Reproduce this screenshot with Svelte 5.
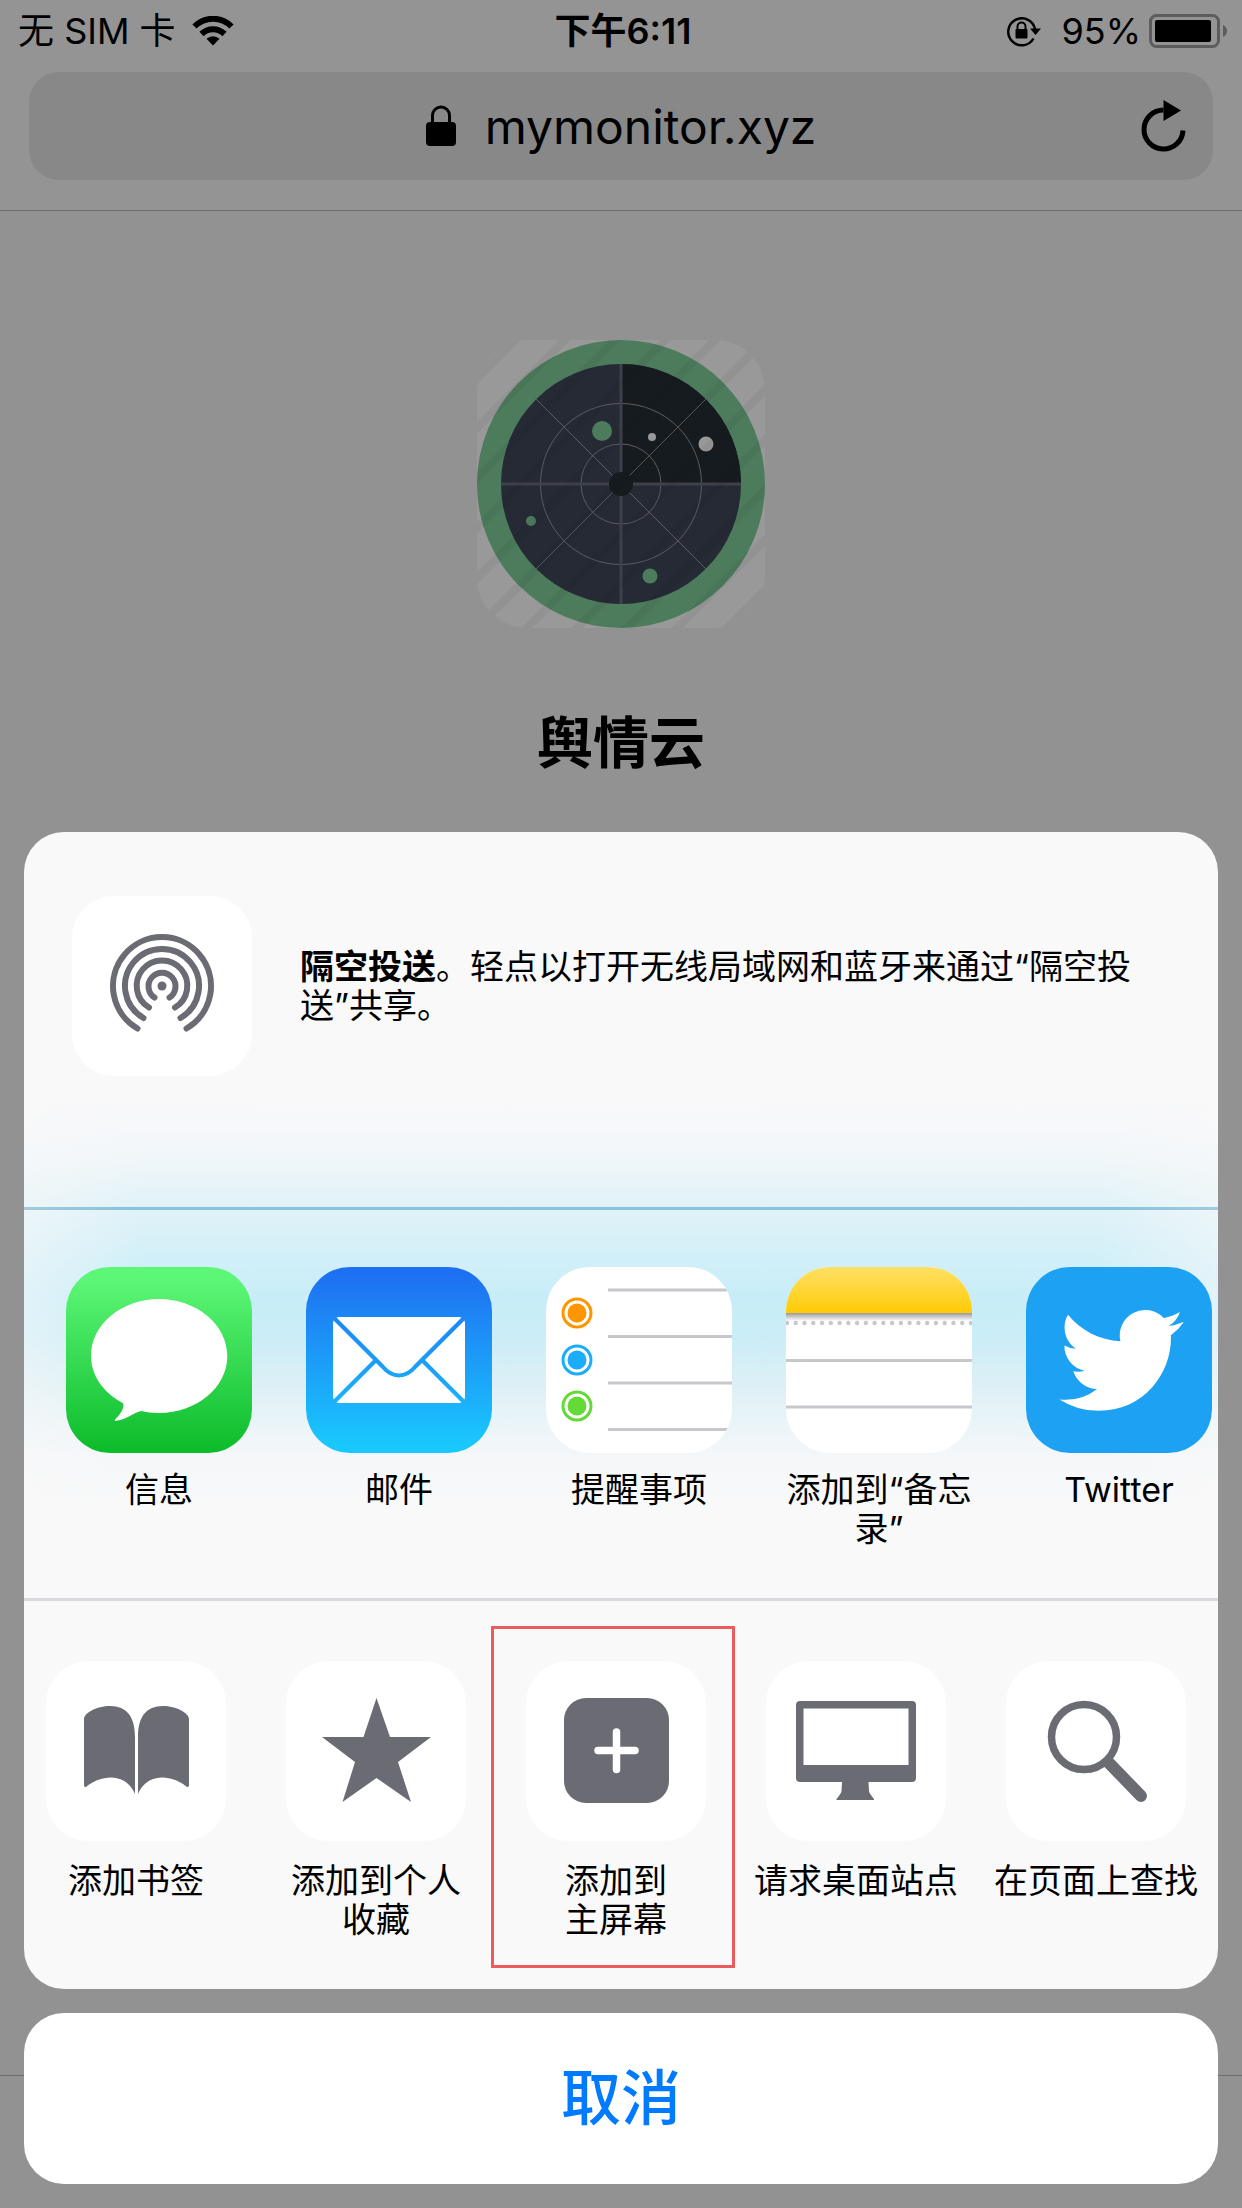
<script>
  const apps = [
    { id: 'messages', label: '信息' },
    { id: 'mail', label: '邮件' },
    { id: 'reminders', label: '提醒事项' },
    { id: 'notes', label: '添加到“备忘\n录”' },
    { id: 'twitter', label: 'Twitter' },
  ];
  const actions = [
    { id: 'bookmark', label: '添加书签' },
    { id: 'favorite', label: '添加到个人\n收藏' },
    { id: 'home', label: '添加到\n主屏幕', highlighted: true },
    { id: 'desktop', label: '请求桌面站点' },
    { id: 'find', label: '在页面上查找' },
  ];
  const stripes = Array.from({ length: 11 }, (_, i) => 42 + i * 50);
  const perforations = Array.from({ length: 22 }, (_, i) => 1 + i * 8.76);
  const reminders = [
    { y: 46, color: '#ff9500' },
    { y: 93, color: '#1badf8' },
    { y: 139, color: '#63da38' },
  ];
</script>

{#snippet appIcon(id)}
  <svg class="app-icon" viewBox="0 0 186 186" aria-hidden="true">
    {#if id === 'messages'}
      <defs>
        <linearGradient id="g-msg" x1="0" y1="0" x2="0" y2="1">
          <stop offset="0.06" stop-color="#5df777" />
          <stop offset="1" stop-color="#0bbb29" />
        </linearGradient>
      </defs>
      <rect width="186" height="186" fill="url(#g-msg)" />
      <path fill="#fff" d="M93 32C130.500 32 161.300 57.500 161.300 89S130.500 146 93 146C86 146 80 145 75 144C69 145 60 153 49 154C47 153 57 147 57.500 138Q57.500 136 55 135C37 125 25 108 25 89C25 57.500 55.500 32 93 32Z" />
    {:else if id === 'mail'}
      <defs>
        <linearGradient id="g-mail" gradientUnits="userSpaceOnUse" x1="0" y1="0" x2="0" y2="186">
          <stop offset="0.04" stop-color="#1e70f2" />
          <stop offset="0.96" stop-color="#1ac8fd" />
        </linearGradient>
      </defs>
      <rect width="186" height="186" fill="url(#g-mail)" />
      <rect x="27" y="50" width="132" height="86" rx="6" fill="#fff" />
      <g fill="none" stroke="url(#g-mail)" stroke-width="4.200">
        <path d="M27 50L76 99Q84 108.500 93 108.500Q102 108.500 110 99L159 50" />
        <path d="M27 136L69 94M159 136L117 94" />
      </g>
    {:else if id === 'reminders'}
      <rect width="186" height="186" fill="#fff" />
      <path d="M62 23H186M62 69.500H186M62 116H186M62 162.500H186" stroke="#c8c7cc" stroke-width="3" />
      {#each reminders as r}
        <circle cx="31" cy={r.y} r="14" fill="none" stroke={r.color} stroke-width="3" />
        <circle cx="31" cy={r.y} r="9.500" fill={r.color} />
      {/each}
    {:else if id === 'notes'}
      <defs>
        <linearGradient id="g-note" x1="0" y1="0" x2="0" y2="1">
          <stop offset="0" stop-color="#ffe066" />
          <stop offset="1" stop-color="#ffcb05" />
        </linearGradient>
        <linearGradient id="g-shade" x1="0" y1="0" x2="0" y2="1">
          <stop offset="0" stop-color="#9a9a9a" />
          <stop offset="1" stop-color="#fff" />
        </linearGradient>
      </defs>
      <rect width="186" height="186" fill="#fff" />
      <rect width="186" height="46" fill="url(#g-note)" />
      <rect y="46" width="186" height="8" fill="url(#g-shade)" />
      {#each perforations as x}
        <circle cx={x} cy="56" r="2.200" fill="#c8c7cc" />
      {/each}
      <path d="M0 93.500H186M0 140H186" stroke="#c8c7cc" stroke-width="3" />
    {:else}
      <rect width="186" height="186" fill="#1da1f2" />
      <path transform="translate(33.500 31.400) scale(5.170)" fill="#fff" d="M23.953 4.570a10 10 0 01-2.825.775 4.958 4.958 0 002.163-2.723c-.951.555-2.005.959-3.127 1.184a4.920 4.920 0 00-8.384 4.482C7.690 8.095 4.067 6.130 1.640 3.162a4.822 4.822 0 00-.666 2.475c0 1.710.870 3.213 2.188 4.096a4.904 4.904 0 01-2.228-.616v.060a4.923 4.923 0 003.946 4.827 4.996 4.996 0 01-2.212.085 4.936 4.936 0 004.604 3.417 9.867 9.867 0 01-6.102 2.105c-.390 0-.779-.023-1.170-.067a13.995 13.995 0 007.557 2.209c9.053 0 13.998-7.496 13.998-13.985 0-.210 0-.420-.015-.630A9.935 9.935 0 0024 4.590z" />
    {/if}
  </svg>
{/snippet}

{#snippet actionIcon(id)}
  <svg class="tile" viewBox="0 0 180 180" aria-hidden="true" fill="#6b6b74">
    {#if id === 'bookmark'}
      <path d="M38 58C38 52 51 45 64 45C81 45 89 56 89 76V133C85 123 76 116.500 65 116.500C55 116.500 46 121 40 126Q38 126 38 124.500Z" />
      <path d="M143 58C143 52 130 45 117 45C100 45 92 56 92 76V133C96 123 105 116.500 116 116.500C126 116.500 135 121 141 126Q143 126 143 124.500Z" />
    {:else if id === 'favorite'}
      <path d="M90.500 37L104 76H145L112 101L125 141L90.500 117L56.500 141L69 101L36 76H77.500Z" />
    {:else if id === 'home'}
      <rect x="38" y="37" width="105" height="105" rx="22" />
      <path d="M90.500 71V108.500M72 89.500H109" stroke="#fff" stroke-width="7.500" stroke-linecap="round" />
    {:else if id === 'desktop'}
      <path fill-rule="evenodd" d="M34 40H146Q150 40 150 44V117Q150 121 146 121H102.500L103 130Q103 132 108 138V139H70.500V138Q75.500 132 75.500 130L76 121H34Q30 121 30 117V44Q30 40 34 40ZM37.500 47.500V104H142.500V47.500Z" />
    {:else}
      <circle cx="78" cy="76" r="32.500" fill="none" stroke="#6b6b74" stroke-width="7.500" />
      <path d="M103 102L135 135" stroke="#6b6b74" stroke-width="12" stroke-linecap="round" />
    {/if}
  </svg>
{/snippet}

<div class="screen">
  <header>
    <div class="status">
      <div class="carrier">
        <span>无 SIM 卡</span>
        <svg width="42" height="30" viewBox="0 0 42 30" aria-hidden="true">
          <path d="M21 29.500L14.500 22.800A9.500 9.500 0 0 1 27.500 22.800Z" />
          <path d="M9.500 18A16.300 16.300 0 0 1 32.500 18M2.500 10.500A26 26 0 0 1 39.500 10.500" fill="none" stroke="#000" stroke-width="6" />
        </svg>
      </div>
      <span class="time">下午6:11</span>
      <div class="power">
        <svg class="rotation" width="35" height="32" viewBox="0 0 35 32" aria-hidden="true">
          <path d="M27.500 23.500A13.500 13.500 0 1 1 29 14" fill="none" stroke="#000" stroke-width="2.500" />
          <path d="M24 13.500H35L29.500 20Z" />
          <rect x="9.500" y="14" width="12" height="9.500" rx="1" />
          <path d="M11.500 15V11.500A4 4 0 0 1 19.500 11.500V15" fill="none" stroke="#000" stroke-width="2" />
        </svg>
        <span>95%</span>
        <svg width="79" height="34" viewBox="0 0 79 34" aria-hidden="true">
          <rect x="1.500" y="1.500" width="68" height="31" rx="6" fill="none" stroke="#5c5c5c" stroke-width="3" />
          <rect x="6" y="6" width="56" height="22" rx="2" />
          <path d="M74 11Q78 13 78 17T74 23Z" fill="#5c5c5c" />
        </svg>
      </div>
    </div>
    <div class="address">
      <svg width="30" height="42" viewBox="0 0 30 42" aria-hidden="true">
        <rect y="17" width="30" height="24" rx="4" />
        <path d="M6.500 18V10.500A8.500 8.500 0 0 1 23.500 10.500V18" fill="none" stroke="#000" stroke-width="3" />
      </svg>
      <span>mymonitor.xyz</span>
      <button class="reload" aria-label="重新载入">
        <svg width="46" height="54" viewBox="0 0 46 54" aria-hidden="true">
          <path d="M42 31.500A19.500 19.500 0 1 1 22.500 11" fill="none" stroke="#000" stroke-width="5" />
          <path d="M22.500 1L40 11.500L22.500 22Z" />
        </svg>
      </button>
    </div>
  </header>

  <main>
    <svg class="logo" viewBox="0 0 288 288" aria-hidden="true">
      <defs>
        <clipPath id="logo-clip"><rect width="288" height="288" rx="50" /></clipPath>
        <clipPath id="ring-clip"><circle cx="144" cy="144" r="144" /></clipPath>
      </defs>
      <g clip-path="url(#logo-clip)">
        <rect width="288" height="288" fill="#999" />
        <path d="M0 0H38L0 38ZM288 288H250L288 250Z" fill="#949494" />
        {#each stripes as s}
          <path d="M{s} -4L{s - 296} 292" stroke="#929292" stroke-width="8" />
        {/each}
      </g>
      <circle cx="144" cy="144" r="144" fill="#4d7d5d" />
      <circle cx="144" cy="144" r="120" fill="#252b36" />
      <path d="M144 144V24A120 120 0 0 1 264 144Z" fill="#171c20" />
      <g fill="none" stroke="#5c5e60" stroke-width="1">
        <circle cx="144" cy="144" r="40" />
        <circle cx="144" cy="144" r="80.500" />
        <path d="M59 59L229 229M229 59L59 229" />
      </g>
      <path d="M144 24V264M24 144H264" stroke="#3f424a" stroke-width="3" />
      <circle cx="144" cy="144" r="12" fill="#171c20" />
      <g fill="#4d7d5d">
        <circle cx="125" cy="91" r="10" />
        <circle cx="54" cy="181" r="5" />
        <circle cx="173" cy="236" r="7.500" />
      </g>
      <g fill="#999">
        <circle cx="175" cy="97" r="4" />
        <circle cx="229" cy="104" r="7.500" />
      </g>
      <g clip-path="url(#ring-clip)" opacity="0.050">
        {#each stripes as s}
          <path d="M{s} -4L{s - 296} 292" stroke="#000" stroke-width="8" />
        {/each}
      </g>
    </svg>
    <h1>舆情云</h1>
  </main>
  <footer></footer>

  <div class="overlay" role="dialog" aria-label="共享">
    <div class="sheet">
      <section class="airdrop">
        <svg class="tile" viewBox="0 0 180 180" aria-hidden="true">
          <g fill="none" stroke="#6b6b74" stroke-width="6" stroke-linecap="round">
            <path d="M65.500 132.500A49 49 0 1 1 114.500 132.500" />
            <path d="M71.500 122A37 37 0 1 1 108.500 122" />
            <path d="M77 111.500A25.300 25.300 0 1 1 103 111.500" />
            <path d="M82.500 101.500A13.500 13.500 0 1 1 97.500 101.500" />
          </g>
          <circle cx="90" cy="90" r="4.500" fill="#6b6b74" />
        </svg>
        <p><strong>隔空投送</strong>。轻点以打开无线局域网和蓝牙来通过“隔空投送”共享。</p>
      </section>
      <hr class="tinted" />
      <section class="row apps">
        {#each apps as app}
          <button class="item">
            {@render appIcon(app.id)}
            <span>{app.label}</span>
          </button>
        {/each}
      </section>
      <hr />
      <section class="row actions">
        {#each actions as action}
          <button class="item" class:highlighted={action.highlighted}>
            {@render actionIcon(action.id)}
            <span>{action.label}</span>
          </button>
        {/each}
      </section>
    </div>
    <button class="cancel">取消</button>
  </div>
</div>

<style>
  :global(body) {
    background: #929292;
  }
  .screen {
    position: relative;
    display: flex;
    flex-direction: column;
    min-height: 100vh;
    overflow: hidden;
    background: #929292;
    color: #000;
    font-family: Inter, 'Noto Sans CJK SC', sans-serif;
  }
  button {
    margin: 0;
    padding: 0;
    border: 0;
    background: none;
    color: inherit;
    font: inherit;
  }
  svg {
    display: block;
    flex: none;
  }
  header {
    padding-bottom: 30px;
    border-bottom: 1px solid #6b6b6b;
    background: #949494;
  }
  .status {
    display: grid;
    grid-template-columns: 1fr auto 1fr;
    align-items: center;
    height: 62px;
    margin-bottom: 10px;
    padding: 0 14px 0 18px;
    font-size: 36px;
    line-height: 62px;
  }
  .carrier,
  .power {
    display: flex;
    align-items: center;
    gap: 16px;
  }
  .power {
    justify-content: flex-end;
    gap: 8px;
  }
  .rotation {
    margin-right: 12px;
  }
  .time {
    font-weight: 600;
  }
  .address {
    position: relative;
    display: flex;
    align-items: center;
    justify-content: center;
    gap: 29px;
    height: 108px;
    margin: 0 29px;
    border-radius: 30px;
    background: #888;
    font-size: 48px;
  }
  .reload {
    position: absolute;
    right: 26px;
  }
  main {
    display: flex;
    flex: 1;
    flex-direction: column;
    align-items: center;
    padding-top: 129px;
  }
  .logo {
    width: 288px;
    height: 288px;
  }
  h1 {
    margin: 75px 0 0;
    font-size: 56px;
    font-weight: 700;
    line-height: 80px;
  }
  footer {
    height: 132px;
    border-top: 1px solid #6b6b6b;
  }
  .overlay {
    position: absolute;
    right: 24px;
    bottom: 24px;
    left: 24px;
    display: flex;
    flex-direction: column;
    gap: 24px;
    font-size: 34px;
    line-height: 39px;
  }
  .sheet {
    overflow: hidden;
    border-radius: 40px;
    background:
      linear-gradient(to right, #f9f9f980, #f9f9f900 120px, #f9f9f900 calc(100% - 120px), #f9f9f980),
      linear-gradient(
        #f9f9f9 260px,
        #f7f8fb 290px,
        #eff6f9 330px,
        #e0f2f8 375px,
        #d4f0f8 418px,
        #c8edf8 465px,
        #cbedf7 505px,
        #dceff5 550px,
        #eaf4f8 590px,
        #f5f7f9 625px,
        #f9f9f9 680px
      );
  }
  .airdrop {
    display: flex;
    align-items: center;
    gap: 48px;
    padding: 64px 84px 131px 48px;
  }
  .airdrop p {
    margin: 0;
  }
  .tile {
    width: 180px;
    height: 180px;
    border-radius: 42px;
    background: #fff;
  }
  hr {
    height: 3px;
    margin: 0;
    border: 0;
    background: #d9d9df;
  }
  .tinted {
    background: linear-gradient(to right, #a2cadc, #86c5dd 100px, #86c5dd calc(100% - 100px), #a2cadc);
  }
  .row {
    display: flex;
    align-items: flex-start;
    gap: 36px;
    overflow: hidden;
  }
  .apps {
    min-height: 331px;
    padding: 57px 0 0 33px;
  }
  .actions {
    min-height: 328px;
    padding: 60px 0 0 10px;
  }
  .item {
    position: relative;
    display: flex;
    flex: none;
    flex-direction: column;
    align-items: center;
    gap: 17px;
    width: 204px;
    white-space: pre;
  }
  .actions .item {
    gap: 20px;
  }
  .app-icon {
    width: 186px;
    height: 186px;
    border-radius: 44px;
  }
  .highlighted::after {
    position: absolute;
    inset: -35px -17px -29px -23px;
    border: 3px solid #ed5c5c;
    content: '';
  }
  .cancel {
    height: 171px;
    border-radius: 40px;
    background: #fff;
    color: #007aff;
    font-size: 60px;
    font-weight: 500;
  }
</style>
